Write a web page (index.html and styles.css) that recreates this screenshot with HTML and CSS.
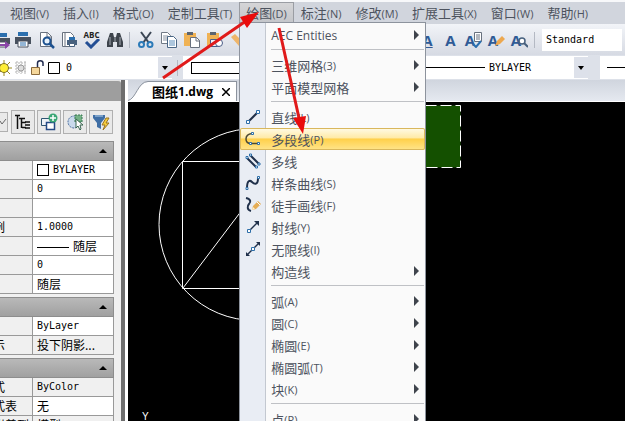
FILE: index.html
```html
<!DOCTYPE html>
<html lang="zh-CN">
<head>
    <meta charset="UTF-8">
    <meta name="viewport" content="width=device-width, initial-scale=1.0">
    <title>图纸1.dwg</title>
    <link rel="stylesheet" href="styles.css">
</head>
<body>
    <nav class="menubar">
        <button class="menu-title">视图<small>(V)</small></button>
        <button class="menu-title">插入<small>(I)</small></button>
        <button class="menu-title">格式<small>(O)</small></button>
        <button class="menu-title">定制工具<small>(T)</small></button>
        <div class="menu-open">
            <button class="menu-title active">绘图<small>(D)</small></button>
            <!-- Draw menu -->
            <div class="dropdown">
                <button class="item more latin"><span class="icon"></span>AEC Entities</button>
                <hr>
                <button class="item more"><span class="icon"></span>三维网格<small>(3)</small></button>
                <button class="item more"><span class="icon"></span>平面模型网格</button>
                <hr>
                <button class="item"><span class="icon"><svg width="16" height="16" viewBox="0 0 16 16"><path d="M3 13L13 3" stroke="#20304a" stroke-width="2"/><path d="M1.500 11.500h3v3h-3zM11.500 1.500h3v3h-3z" fill="#fff" stroke="#2d6ea8"/></svg></span>直线<small>(L)</small></button>
                <button class="item selected"><span class="icon"><svg width="16" height="16" viewBox="0 0 16 16"><path d="M7 2.500C3 3 1 5 1 8s2 4.500 5 4.500h8" fill="none" stroke="#4c4a35" stroke-width="1.500"/><path d="M6.500 1.500h2v2h-2zM4.500 11.500h2v2h-2zM12.500 11.500h2v2h-2z" fill="#fff" stroke="#2d6ea8"/></svg></span>多段线<small>(P)</small></button>
                <button class="item"><span class="icon"><svg width="16" height="16" viewBox="0 0 16 16"><path d="M2 5L11 14M5 2L14 11" stroke="#20304a" stroke-width="2"/><path d="M1 3.500h2v2H1zM4.500 1h2v2h-2zM10.500 13h2v2h-2zM13 10h2v2h-2z" fill="#fff" stroke="#2d6ea8"/></svg></span>多线</button>
                <button class="item"><span class="icon"><svg width="16" height="16" viewBox="0 0 16 16"><path d="M2 13C2 5 5 5 7 7s6 4 6-4" fill="none" stroke="#20304a" stroke-width="2"/><path d="M1 12.500h2v2H1zM12.500 1.500h2v2h-2z" fill="#fff" stroke="#2d6ea8"/></svg></span>样条曲线<small>(S)</small></button>
                <button class="item"><span class="icon"><svg width="16" height="16" viewBox="0 0 16 16"><path d="M1 1c5 1 5 4 3 6s-2 6 2 7" fill="none" stroke="#20304a" stroke-width="2"/><path d="M7 13l1-4 5-5 3 3-5 5z" fill="#e6ad55"/><path d="M7 13l1-3 2 2z" fill="#fff1d0"/><path d="M12 5l3 3" stroke="#fff"/></svg></span>徒手画线<small>(F)</small></button>
                <button class="item"><span class="icon"><svg width="16" height="16" viewBox="0 0 16 16"><path d="M4 12L12 4" stroke="#20304a" stroke-width="1.500"/><path d="M9 2h5v5z" fill="#20304a"/><path d="M2.500 10.500h3v3h-3z" fill="#fff" stroke="#2d6ea8"/></svg></span>射线<small>(Y)</small></button>
                <button class="item"><span class="icon"><svg width="16" height="16" viewBox="0 0 16 16"><path d="M2 14L14 2" stroke="#20304a" stroke-width="1.500"/><path d="M11 1h4v4zM1 11v4h4z" fill="#20304a"/><path d="M6.500 6.500h3v3h-3z" fill="#fff" stroke="#2d6ea8"/></svg></span>无限线<small>(I)</small></button>
                <button class="item more"><span class="icon"></span>构造线</button>
                <hr>
                <button class="item more"><span class="icon"></span>弧<small>(A)</small></button>
                <button class="item more"><span class="icon"></span>圆<small>(C)</small></button>
                <button class="item more"><span class="icon"></span>椭圆<small>(E)</small></button>
                <button class="item more"><span class="icon"></span>椭圆弧<small>(T)</small></button>
                <button class="item more"><span class="icon"></span>块<small>(K)</small></button>
                <hr>
                <button class="item more"><span class="icon"></span>点<small>(P)</small></button>
            </div>
        </div>
        <button class="menu-title">标注<small>(N)</small></button>
        <button class="menu-title">修改<small>(M)</small></button>
        <button class="menu-title">扩展工具<small>(X)</small></button>
        <button class="menu-title">窗口<small>(W)</small></button>
        <button class="menu-title">帮助<small>(H)</small></button>
    </nav>

    <!-- Standard toolbar -->
    <div class="toolbar">
        <button class="tool cut" aria-label="发布"><svg width="18" height="18" viewBox="0 0 18 18"><path d="M4 2h10v4H4z" fill="#2b6fae"/><path d="M1 7h16v6H1z" fill="#4a525e"/><path d="M4 11h10v5H4z" fill="#fff" stroke="#4a525e"/><path d="M7 13h5v-3l5 4-5 4v-3H7z" fill="#8a46a8"/></svg></button>
        <button class="tool" aria-label="打印"><svg width="18" height="18" viewBox="0 0 18 18"><path d="M4 1h10v4H4z" fill="#2b6fae"/><path d="M1 6h16v7H1z" fill="#48515e"/><path d="M4 10h10v6H4z" fill="#fff" stroke="#48515e"/><path d="M6 12h6M6 14h6" stroke="#2b6fae"/></svg></button>
        <button class="tool" aria-label="打印预览"><svg width="18" height="18" viewBox="0 0 18 18"><path d="M3.500 1.500h7l4 4v10h-11z" fill="#fff" stroke="#68717e"/><path d="M10 1v5h5" fill="none" stroke="#68717e"/><circle cx="10" cy="10" r="3.500" fill="#e8f2fb" stroke="#1e5290" stroke-width="2"/><path d="M12.500 12.500L17 17" stroke="#1e5290" stroke-width="2.500"/></svg></button>
        <button class="tool" aria-label="页面设置"><svg width="18" height="18" viewBox="0 0 18 18"><path d="M2.500 1.500h8l3 3v11h-11z" fill="#fff" stroke="#68717e"/><path d="M5 2v13" stroke="#68717e"/><path d="M9 6h6v3H9z" fill="#2b6fae"/><path d="M7 9h10v5H7z" fill="#48617e"/><path d="M9.500 12.500h5v3h-5z" fill="#fff" stroke="#48617e"/></svg></button>
        <button class="tool spell" aria-label="拼写检查"><span>ABC</span><svg width="18" height="10" viewBox="0 0 18 10"><path d="M3 3l5 5 8-8" fill="none" stroke="#234e94" stroke-width="3"/></svg></button>
        <button class="tool" aria-label="查找"><svg width="18" height="18" viewBox="0 0 18 18"><path d="M4 2h3l1 4h2l1-4h3l3 9v5h-6v-5H7v5H1v-5z" fill="#3d434b"/><path d="M4 6v8M14 6v8M9 6v5" stroke="#a7adb5"/></svg></button>
        <span class="bar"></span>
        <button class="tool" aria-label="剪切"><svg width="18" height="18" viewBox="0 0 18 18"><path d="M4 1l8 11M14 1L6 12" stroke="#3b4654" stroke-width="2"/><circle cx="4.500" cy="13.500" r="2.500" fill="none" stroke="#2b7ab8" stroke-width="2"/><circle cx="13" cy="13.500" r="2.500" fill="none" stroke="#2b7ab8" stroke-width="2"/></svg></button>
        <button class="tool" aria-label="复制"><svg width="18" height="18" viewBox="0 0 18 18"><path d="M1.500 1.500h6l3 3v8h-9z" fill="#fff" stroke="#707985"/><path d="M3 5h5M3 7h5M3 9h5" stroke="#8b95a3"/><path d="M7.500 5.500h6l3 3v8h-9z" fill="#fff" stroke="#4a6685"/><path d="M9 10h6M9 12h6M9 14h6" stroke="#5b8dbb"/></svg></button>
        <button class="tool" aria-label="粘贴"><svg width="18" height="18" viewBox="0 0 18 18"><path d="M1 2h12v13H1z" fill="#f0b254"/><path d="M4 1h6v3H4z" fill="#5b6470"/><path d="M7.500 6.500h6l3 3v7h-9z" fill="#fff" stroke="#68717e"/><path d="M13 6v4h4" fill="none" stroke="#68717e"/></svg></button>
        <button class="tool" aria-label="粘贴为块"><svg width="18" height="18" viewBox="0 0 18 18"><path d="M1 2h12v13H1z" fill="#f0b254"/><path d="M4 1h6v3H4z" fill="#5b6470"/><path d="M4.500 8.500h8v7h-8z" fill="#eef3f9" stroke="#4b5c86"/><circle cx="13" cy="12" r="3.500" fill="#fff" stroke="#4b5c86"/></svg></button>
        <button class="tool" aria-label="特性匹配"><svg width="18" height="18" viewBox="0 0 18 18"><path d="M2 6l4-3 8 8-4 4z" fill="#efb56a"/><path d="M10 5l4-4 2 2-4 5z" fill="#4c7b62"/></svg></button>
        <span class="covered"></span>
        <button class="tool letter" aria-label="单行文字"><u>A</u></button>
        <button class="tool letter" aria-label="多行文字">A</button>
        <button class="tool letter" aria-label="编辑文字">A<svg width="10" height="16" viewBox="0 0 10 16"><path d="M2.500 .5h7v9h-7z" fill="#fff" stroke="#68717e"/><path d="M4 3h4M4 5h4M4 7h4" stroke="#68717e"/><path d="M1 12l3 3 5-6" fill="none" stroke="#2b6fae" stroke-width="2"/></svg></button>
        <button class="tool letter" aria-label="文字样式">A<svg width="10" height="16" viewBox="0 0 10 16"><path d="M0 14l2-5 5-5 3 3-5 5z" fill="#eda84f"/></svg></button>
        <button class="tool letter" aria-label="查找文字">A<svg width="10" height="16" viewBox="0 0 10 16"><circle cx="4" cy="9" r="3" fill="#fff" stroke="#48617e" stroke-width="1.500"/><path d="M6 11l4 4" stroke="#48617e" stroke-width="2"/></svg></button>
        <span class="bar"></span>
        <select class="text-style" aria-label="文字样式"><option>Standard</option></select>
    </div>

    <!-- Layer and property toolbar -->
    <div class="toolbar properties">
        <div class="combo layer">
            <svg width="60" height="18" viewBox="0 0 60 18">
                <path d="M4 1v16M-4 9H12M-2 3l12 12M10 3L-2 15" stroke="#9a8b23"/>
                <circle cx="4" cy="9" r="4.500" fill="#ffee35" stroke="#80742a"/>
                <path d="M15 4h12M15 7h12M15 10h12M15 13h12M17 2v13M21 2v13M25 2v13" stroke="#b4b4b4" stroke-dasharray="2 1"/>
                <circle cx="21" cy="9" r="3" fill="#ddd" stroke="#999"/>
                <path d="M31.500 8.500h8v7h-8z" fill="#f5d79b" stroke="#8b6b3d"/>
                <path d="M37.500 8V4c0-3 5.500-3 5.500 0v3" fill="none" stroke="#222c50" stroke-width="1.500"/>
                <path d="M48.500 3.500h11v11h-11z" fill="#fff" stroke="#000"/>
            </svg>
            <select aria-label="图层"><option>0</option></select>
            <span class="arrow"></span>
        </div>
        <span class="bar"></span>
        <div class="combo linetype">
            <span class="swatch"></span>
            <span class="line"></span>
            <select aria-label="线型"><option>BYLAYER</option></select>
            <span class="arrow"></span>
        </div>
        <div class="combo weight"><span class="line"></span></div>
    </div>

    <main class="workspace">
        <aside class="palette">
            <div class="palette-title"></div>
            <div class="palette-tools">
                <button class="pick" aria-label="选择"><svg width="8" height="8" viewBox="0 0 8 8"><path d="M0 3l2 3 4-5" fill="none" stroke="#666"/></svg></button>
                <button aria-label="分类"><svg width="18" height="18" viewBox="0 0 18 18"><path d="M3.500 2v14M1 2.500h5M7.500 5v10M5 5.500h6M8 9.500h4M8 14.500h4" stroke="#111" stroke-width="1.500"/><path d="M11 9h5M11 12h5M11 15h5" stroke="#111" stroke-width="1.500"/></svg></button>
                <button aria-label="添加"><svg width="18" height="18" viewBox="0 0 18 18"><path d="M1.500 5.500h9v7h-9z" fill="#eef2f7" stroke="#2f5572"/><path d="M6.500 9.500h8v7h-8z" fill="#fff" stroke="#244a86" stroke-width="1.500"/><circle cx="13" cy="5" r="4.500" fill="#3aa675"/><path d="M10 5h6M13 2v6" stroke="#fff" stroke-width="1.500"/></svg></button>
                <button aria-label="选择对象"><svg width="18" height="18" viewBox="0 0 18 18"><circle cx="8" cy="9" r="6" fill="#c9d9ec" stroke="#46699b" stroke-dasharray="2 1"/><path d="M9 2h7v7H9z" fill="#75b287" stroke="#367750" stroke-dasharray="2 1"/><path d="M10 6v9l2-2 2 4 1-1-1-4h3z" fill="#fff" stroke="#3b6652"/></svg></button>
                <button aria-label="快速选择"><svg width="18" height="18" viewBox="0 0 18 18"><path d="M1 2h12v3L9 10v6l-4-2v-4L1 5z" fill="#3f6ea5"/><path d="M3 3h8" stroke="#b7d2ec"/><path d="M14 5l-4 7h3l-2 5 6-7h-3l3-5z" fill="#f7cd3c" stroke="#9a7421"/></svg></button>
            </div>
            <section>
                <button class="fold" aria-label="常规"></button>
                <table>
                    <tr><th></th><td><i class="box"></i>BYLAYER</td></tr>
                    <tr><th></th><td>0</td></tr>
                    <tr><th></th><td></td></tr>
                    <tr><th>例</th><td>1.0000</td></tr>
                    <tr><th></th><td class="cn"><i class="dash"></i>随层</td></tr>
                    <tr><th></th><td>0</td></tr>
                    <tr><th></th><td class="cn">随层</td></tr>
                </table>
            </section>
            <section>
                <button class="fold" aria-label="三维效果"></button>
                <table>
                    <tr><th></th><td>ByLayer</td></tr>
                    <tr><th>示</th><td class="cn locked">投下阴影...</td></tr>
                </table>
            </section>
            <section>
                <button class="fold" aria-label="打印样式"></button>
                <table>
                    <tr><th>式</th><td class="locked">ByColor</td></tr>
                    <tr><th>式表</th><td class="cn">无</td></tr>
                    <tr><th>附着到</th><td class="cn locked">模型</td></tr>
                </table>
            </section>
        </aside>

        <div class="document">
            <div class="tabs">
                <svg class="slant" width="20" height="20" viewBox="0 0 20 20"><path d="M0 20C8 18 10 1 20 1V20z" fill="#fff"/><path d="M0 19.500C8 18 10 .5 20 .5" fill="none" stroke="#8c939e"/></svg>
                <div class="tab">图纸<span>1.dwg</span><button aria-label="关闭"><svg width="8" height="8" viewBox="0 0 8 8"><path d="M0 0l8 8M8 0L0 8" stroke="#000" stroke-width="1.500"/></svg></button></div>
            </div>
            <div class="canvas">
                <svg width="340" height="319" viewBox="128 102 340 319">
                    <g fill="none" stroke="#fff">
                        <circle cx="255" cy="224.500" r="96"/>
                        <path d="M182.500 161.500H327.500V288.500H182.500zM183 288L242 210"/>
                    </g>
                    <path d="M380.500 105.500H460.500V167.500H380.500z" fill="#145000" stroke="#fff" stroke-dasharray="11 4"/>
                    <text x="142" y="420">Y</text>
                </svg>
            </div>
        </div>
    </main>

    <!-- Red pointers over the menu -->
    <svg class="pointers" width="320" height="140" viewBox="0 0 320 140">
        <path d="M163 78L246 21M279 28L299 118" stroke="#e01a1a" stroke-width="3"/>
        <path d="M259 12L247 28L240 17zM303 134L293 118L306 116z" fill="#e90c0c"/>
    </svg>
</body>
</html>
```
FILE: styles.css
```css
* {
    box-sizing: border-box;
}

body {
    margin: 0;
    height: 100vh;
    position: relative;
    display: flex;
    flex-direction: column;
    overflow: hidden;
    background: #d5d9e2;
    font-family: "Noto Sans CJK SC", sans-serif;
    font-size: 13px;
    color: #4d535e;
}

button, select {
    margin: 0;
    padding: 0;
    border: none;
    background: none;
    font: inherit;
    color: inherit;
}

svg {
    display: block;
    flex: none;
}

small {
    font-family: "Open Sans", sans-serif;
    font-size: 11px;
}

/* Menu bar */
.menubar {
    display: flex;
    flex: none;
    height: 24px;
    padding-left: 3px;
    border-top: 2px solid #f7f8fa;
    background: #d1d5dd;
}

.menu-title {
    flex: none;
    height: 22px;
    padding: 0 7px;
    line-height: 20px;
    white-space: nowrap;
}

.menu-title.active {
    border: 1px solid #9a9da3;
    border-bottom: none;
    padding: 0 6px;
    background: linear-gradient(#d5d5d7, #c3c5c9);
}

.menu-open {
    position: relative;
    z-index: 2;
}

.dropdown {
    position: absolute;
    top: 20px;
    left: 0;
    width: 187px;
    padding-top: 1px;
    border: 1px solid #8d939d;
    background: linear-gradient(90deg, #e9edf4 25px, #c3c8d0 25px, #c3c8d0 26px, #fafafa 26px);
}

.dropdown hr {
    height: 1px;
    margin: 3px 1px 4px 31px;
    border: none;
    background: #bfc1c5;
}

.item {
    position: relative;
    display: flex;
    align-items: center;
    width: 100%;
    height: 22px;
    white-space: nowrap;
}

.item.latin {
    font-family: "Open Sans", sans-serif;
    font-size: 12px;
}

.icon {
    width: 25px;
    margin-right: 6px;
    display: flex;
    justify-content: center;
}

.item.more::after {
    content: "";
    margin-left: auto;
    margin-right: 6px;
    border: 5px solid transparent;
    border-left-color: #3f444c;
    border-right: none;
}

.item.selected {
    border-radius: 2px;
    background: linear-gradient(#fffbe8, #ffeaa6 45%, #ffd04a 50%, #ffe58c);
    box-shadow: inset 0 0 0 1px #d9b75c;
}

/* Toolbars */
.toolbar {
    display: flex;
    flex: none;
    align-items: center;
    height: 31px;
    background: linear-gradient(#f2f4f8, #d6dae3);
}

.tool {
    display: flex;
    flex: none;
    align-items: center;
    justify-content: center;
    width: 23px;
    height: 24px;
}

.tool.cut {
    width: 11px;
    justify-content: flex-end;
    overflow: hidden;
}

.tool.spell {
    flex-direction: column;
    font: bold 8px/8px "Open Sans", sans-serif;
    color: #222;
}

.tool.letter {
    font: bold 15px "Open Sans", sans-serif;
    color: #2f5b96;
}

.tool.letter svg {
    margin-left: -3px;
}

.bar {
    flex: none;
    width: 1px;
    height: 16px;
    margin: 0 4px 0 3px;
    background: #b4b9c3;
}

/* stretch of the toolbar that lies under the open menu */
.covered {
    flex: none;
    width: 167px;
}

select {
    appearance: none;
    color: #000;
    font-family: "DejaVu Sans Mono", monospace;
    font-size: 10px;
}

.text-style {
    flex: 1;
    height: 22px;
    margin: 0 3px;
    padding-left: 4px;
    background: #fff;
}

.properties {
    height: 25px;
    background: #dde1e9;
}

.combo {
    display: flex;
    align-items: center;
    height: 23px;
    background: #fff;
}

.combo select {
    height: 21px;
}

.layer {
    flex: none;
    width: 172px;
}

.layer select {
    flex: 1;
    padding-left: 6px;
}

.arrow {
    display: flex;
    align-items: center;
    justify-content: center;
    flex: none;
    width: 14px;
    height: 21px;
    background: #dde1ea;
}

.arrow::after {
    content: "";
    border: 3px solid transparent;
    border-top: 4px solid #000;
    border-bottom: none;
}

.properties .bar {
    margin: 0 5px;
}

.linetype {
    flex: none;
    width: 405px;
    padding-left: 8px;
}

.swatch {
    width: 150px;
    height: 12px;
    border: 1px solid #000;
}

.line {
    width: 144px;
    height: 1px;
    background: #000;
}

.linetype select {
    flex: 1;
    padding-left: 4px;
}

.weight {
    flex: 1;
    margin-left: 12px;
    padding-left: 7px;
}

.weight .line {
    flex: 1;
}

/* Workspace */
.workspace {
    display: flex;
    flex: 1;
    min-height: 0;
}

.palette {
    flex: none;
    width: 128px;
    border-right: 3px solid #fff;
    box-shadow: inset -4px 0 #6d6d6d;
    background: #f0f0f0;
    overflow: hidden;
    color: #000;
}

.palette-title {
    height: 21px;
    margin-right: 4px;
    border-top: 1px solid #e4e4e4;
    border-top-right-radius: 3px;
    background: #9e9e9e;
}

.palette-tools {
    display: flex;
    gap: 2px;
    padding: 9px 0 7px;
}

.palette-tools button {
    display: flex;
    align-items: center;
    justify-content: center;
    width: 24px;
    height: 24px;
    border: 1px solid #b0b0b0;
    background: #e9e9e9;
}

.palette-tools .pick {
    width: 8px;
    height: 20px;
    margin: 2px 1px 2px 0;
    border-left: none;
}

.palette section {
    width: 114px;
    margin-bottom: 3px;
}

.fold {
    display: flex;
    align-items: center;
    justify-content: flex-end;
    width: 100%;
    height: 20px;
    padding-right: 6px;
    border: 1px solid #8d8d8d;
    border-left: none;
    background: linear-gradient(#b9b9b9, #a0a0a0);
}

.fold::after {
    content: "";
    border: 4px solid transparent;
    border-bottom-color: #000;
    border-top: none;
}

table {
    width: 100%;
    table-layout: fixed;
    border-spacing: 0;
    font: 10px "DejaVu Sans Mono", monospace;
}

th, td {
    height: 19px;
    padding: 0;
    border-right: 1px solid #999;
    border-bottom: 1px solid #999;
    line-height: 18px;
    white-space: nowrap;
    overflow: hidden;
    vertical-align: top;
}

th {
    width: 33px;
    font: 12px/17px "Noto Sans CJK SC", sans-serif;
    text-align: left;
    text-indent: -7px;
}

td {
    padding-left: 4px;
    background: #fff;
}

.cn {
    font: 12px/17px "Noto Sans CJK SC", sans-serif;
}

.locked {
    background: #f0f0f0;
}

.box {
    display: inline-block;
    width: 12px;
    height: 12px;
    margin-right: 4px;
    border: 1px solid #000;
    vertical-align: middle;
}

.dash {
    display: inline-block;
    width: 32px;
    height: 1px;
    margin-right: 4px;
    background: #000;
    vertical-align: middle;
}

.document {
    display: flex;
    flex: 1;
    flex-direction: column;
    min-width: 0;
}

.tabs {
    display: flex;
    align-items: flex-end;
    flex: none;
    height: 22px;
    border-bottom: 1px solid #fff;
    background: linear-gradient(#d0d5de, #e5e9f0);
}

.tab {
    display: flex;
    align-items: center;
    height: 20px;
    padding: 0 6px 0 4px;
    border-top: 1px solid #8c939e;
    border-right: 1px solid #8c939e;
    background: #fff;
    font-weight: bold;
    color: #000;
}

.tab span {
    font: bold 12px "Open Sans", sans-serif;
}

.tab button {
    margin-left: 9px;
}

.canvas {
    flex: 1;
    min-height: 0;
    background: #000;
    overflow: hidden;
}

.canvas text {
    font: 10px "Liberation Sans", sans-serif;
    fill: #fff;
}

.pointers {
    position: absolute;
    top: 0;
    left: 0;
    z-index: 3;
    pointer-events: none;
}
```
